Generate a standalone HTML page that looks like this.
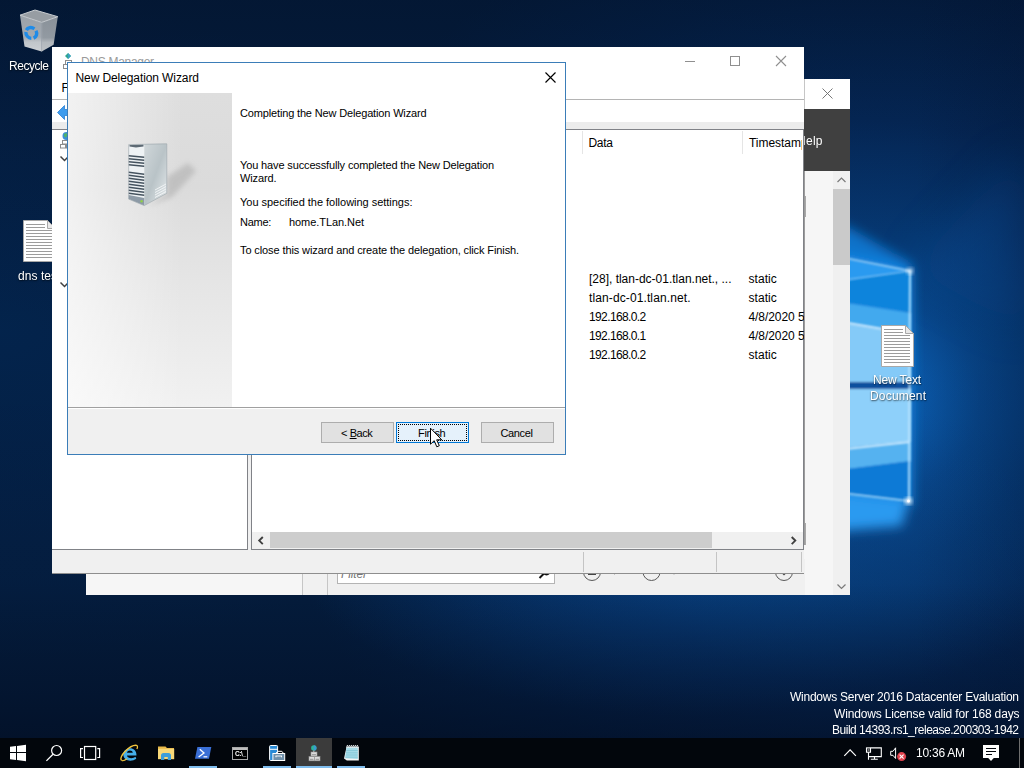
<!DOCTYPE html>
<html lang="en">
<head>
<meta charset="utf-8">
<title>DNS Manager - New Delegation Wizard</title>
<style>
html,body{margin:0;padding:0}
body{width:1024px;height:768px;overflow:hidden;position:relative;background:#04193b;font-family:"Liberation Sans",sans-serif;font-size:12px;line-height:16px;color:#000}
.abs{position:absolute}
.t{position:absolute;white-space:nowrap;line-height:16px;height:16px}
.seg{font-size:12px}
.tah{font-size:11px}
.gs{will-change:transform}
.dl{color:#fff;will-change:transform;text-shadow:0 1px 2px rgba(0,0,0,.5),1px 1px 1px rgba(0,0,0,.25)}
</style>
</head>
<body>
<svg id="wall" width="1024" height="768" viewBox="0 0 1024 768" style="position:absolute;left:0;top:0">
  <defs>
    <radialGradient id="g1" cx="860" cy="400" r="600" gradientUnits="userSpaceOnUse" gradientTransform="translate(860 400) scale(1 0.85) translate(-860 -400)">
      <stop offset="0" stop-color="#0d66bd"/>
      <stop offset="0.1" stop-color="#0a58a8"/>
      <stop offset="0.2" stop-color="#08478c"/>
      <stop offset="0.32" stop-color="#063a76"/>
      <stop offset="0.55" stop-color="#05295a"/>
      <stop offset="0.8" stop-color="#042148"/>
      <stop offset="1" stop-color="#041d3e"/>
    </radialGradient>
    <radialGradient id="g2" cx="0" cy="330" r="330" gradientUnits="userSpaceOnUse" gradientTransform="translate(0 330) scale(1.6 1) translate(0 -330)">
      <stop offset="0" stop-color="#022a5a" stop-opacity="0.5"/>
      <stop offset="1" stop-color="#04275a" stop-opacity="0"/>
    </radialGradient>
    <radialGradient id="g3" cx="690" cy="560" r="260" gradientUnits="userSpaceOnUse" gradientTransform="translate(690 560) scale(1.5 0.6) translate(-690 -560)">
      <stop offset="0" stop-color="#0a4a90" stop-opacity="0.7"/>
      <stop offset="1" stop-color="#0a4a90" stop-opacity="0"/>
    </radialGradient>
    <linearGradient id="gv" x1="0" y1="0" x2="0" y2="1">
      <stop offset="0" stop-color="#020a1c" stop-opacity="0.3"/>
      <stop offset="0.2" stop-color="#020a1c" stop-opacity="0.08"/>
      <stop offset="0.45" stop-color="#020a1c" stop-opacity="0"/>
      <stop offset="0.76" stop-color="#020a1c" stop-opacity="0.06"/>
      <stop offset="0.9" stop-color="#020a1c" stop-opacity="0.4"/>
      <stop offset="1" stop-color="#020a1c" stop-opacity="0.7"/>
    </linearGradient>
    <filter id="b2" x="-20%" y="-20%" width="140%" height="140%"><feGaussianBlur stdDeviation="2"/></filter>
    <filter id="b1" x="-20%" y="-20%" width="140%" height="140%"><feGaussianBlur stdDeviation="0.8"/></filter>
    <filter id="b6" x="-50%" y="-50%" width="200%" height="200%"><feGaussianBlur stdDeviation="6"/></filter>
    <filter id="b20" filterUnits="userSpaceOnUse" x="-100" y="-100" width="1224" height="968"><feGaussianBlur stdDeviation="22"/></filter>
  </defs>
  <rect width="1024" height="768" fill="url(#g1)"/>
  <rect width="1024" height="768" fill="url(#g2)"/>
  <rect width="1024" height="768" fill="url(#g3)"/>
  <rect width="1024" height="768" fill="url(#gv)"/>
  <!-- soft light beams -->
  <g filter="url(#b20)" opacity="0.35">
    <polygon points="912,268 1024,150 1024,330" fill="#0b57a8"/>
    
  </g>
  <linearGradient id="gr" x1="915" y1="0" x2="1024" y2="0" gradientUnits="userSpaceOnUse"><stop offset="0" stop-color="#021230" stop-opacity="0"/><stop offset="1" stop-color="#021230" stop-opacity="0.22"/></linearGradient>
  <rect x="915" y="0" width="109" height="768" fill="url(#gr)"/>
  <!-- window logo -->
  <g>
    <g filter="url(#b6)">
      <polygon points="780,240 912,268 912,505 780,520" fill="#1586e0"/>
      <polygon points="800,488 908,501 902,526 800,534" fill="#2a9af0"/>
      <polygon points="800,212 850,228 912,264 912,272 800,270" fill="#1585e6" opacity="0.75"/>
    </g>
    <g filter="url(#b1)">
      <polygon points="800,250 911,271 800,288" fill="#2a9af0"/>
      <polygon points="800,288 911,271 911,312 800,296" fill="#0f84dc"/>
      <polygon points="800,296 911,313 911,334 800,314.700" fill="#42a9ee"/>
      <polygon points="800,314.700 911,334 911,382 800,382" fill="#84caf8"/>
      <polygon points="800,382 911,382 911,389 800,389" fill="#0a4f9e"/>
      <polygon points="800,389 911,389 911,442 800,452" fill="#8ed0fa"/>
      <polygon points="800,452 911,442 911,461 800,475" fill="#55b2f0"/>
      <polygon points="800,475 911,461 911,501 800,488" fill="#0b7ad6"/>
    </g>
    <g filter="url(#b1)" fill="none" stroke="#d8f0ff">
      <path d="M800,249 L911,271" stroke-width="1.6" opacity="0.75"/>
      <path d="M800,286 L911,271" stroke-width="1.2" opacity="0.6"/>
      <path d="M800,314.700 L884,329.300" stroke-width="2" opacity="0.9"/>
      <path d="M800,454 L909,442" stroke-width="2" opacity="0.9"/>
      <path d="M800,488 L909,501" stroke-width="1.4" opacity="0.8"/>
      <path d="M910,271 L909,501" stroke-width="2" stroke="#bfe6ff" opacity="0.95"/>
    </g>
    <circle cx="908.500" cy="501" r="3.500" fill="#ffffff" filter="url(#b2)" opacity="0.95"/><circle cx="908.500" cy="501" r="1.500" fill="#ffffff"/>
    <circle cx="910" cy="271" r="3" fill="#ffffff" filter="url(#b2)" opacity="0.8"/>
  </g>
</svg>
<!-- desktop icons -->
<svg class="abs" style="left:14px;top:6px" width="50" height="50" viewBox="14 6 50 50">
  <defs>
    <linearGradient id="rb1" x1="0" y1="0" x2="0" y2="1"><stop offset="0" stop-color="#a2a8ae"/><stop offset="0.6" stop-color="#a9afb5"/><stop offset="0.74" stop-color="#c9cdd0"/><stop offset="1" stop-color="#d4d7da"/></linearGradient>
    <linearGradient id="rb2" x1="0" y1="0" x2="0" y2="1"><stop offset="0" stop-color="#8f969d"/><stop offset="0.6" stop-color="#989fa6"/><stop offset="0.74" stop-color="#babfc3"/><stop offset="1" stop-color="#c6cacd"/></linearGradient>
  </defs>
  <polygon points="20,15.200 41.700,22.400 41.700,51.600 24.500,46.400" fill="url(#rb1)" opacity="0.96"/>
  <polygon points="41.700,22.400 57.800,16.700 53.600,44.800 41.700,51.600" fill="url(#rb2)" opacity="0.96"/>
  <polygon points="20,15.200 35,10 57.800,16.700 41.700,22.400" fill="#979da3"/>
  <polygon points="20,15.200 35,10 57.800,16.700 41.700,22.400" fill="none" stroke="#c9cdd1" stroke-width="1"/>
  <path d="M41.700,22.400 V51.600" stroke="#b9bec3" stroke-width="0.600"/>
  <path d="M26.41,30.72 A5.4,5.4 0 0 1 34.40,28.58 M35.98,30.30 A5.4,5.4 0 0 1 33.58,37.89 M31.30,38.40 A5.4,5.4 0 0 1 25.92,32.53" fill="none" stroke="#1e8be8" stroke-width="3.4" transform="skewY(6) translate(0 -3.300)"/>
</svg>
<span class="t seg dl" style="left:9px;top:58px;letter-spacing:-0.448px;">Recycle Bin</span>
<svg class="abs" style="left:23px;top:220px" width="33" height="42" viewBox="0 0 33 42">
  <path d="M0.500,0.500 H24.500 L32.500,8.500 V41.500 H0.500 Z" fill="#fff" stroke="#a8a8a8" stroke-width="1"/>
  <path d="M24.500,0.500 V8.500 H32.500 Z" fill="#e8e8e8" stroke="#a8a8a8" stroke-width="1"/>
  <g stroke="#9c9c9c" stroke-width="1"><path d="M3,4.500H22M3,7.500H22M3,10.500H29M3,13.500H29M3,16.500H29M3,19.500H29M3,22.500H29M3,25.500H29M3,28.500H29M3,31.500H29M3,34.500H29M3,37.500H29"/></g>
</svg>
<span class="t seg dl" style="left:18px;top:268px;letter-spacing:0.059px;">dns test</span>
<svg class="abs" style="left:881px;top:325px" width="33" height="42" viewBox="0 0 33 42">
  <path d="M0.500,0.500 H24.500 L32.500,8.500 V41.500 H0.500 Z" fill="#fff" stroke="#a8a8a8" stroke-width="1"/>
  <path d="M24.500,0.500 V8.500 H32.500 Z" fill="#e8e8e8" stroke="#a8a8a8" stroke-width="1"/>
  <g stroke="#9c9c9c" stroke-width="1"><path d="M3,4.500H22M3,7.500H22M3,10.500H29M3,13.500H29M3,16.500H29M3,19.500H29M3,22.500H29M3,25.500H29M3,28.500H29M3,31.500H29M3,34.500H29M3,37.500H29"/></g>
</svg>
<span class="t seg dl" style="left:873px;top:372px;letter-spacing:-0.134px;">New Text</span>
<span class="t seg dl" style="left:869.5px;top:388px;letter-spacing:0.185px;">Document</span>
<!-- Server Manager window (behind) -->
<div id="sm" class="abs" style="left:86px;top:79px;width:764px;height:516px;background:#f6f6f6;overflow:hidden">
    <div class="abs" style="left:0;top:0;width:764px;height:30px;background:#fff"></div>
  <svg class="abs" style="left:735px;top:8px" width="13" height="13" viewBox="0 0 13 13"><path d="M1.5,1.5 L11.5,11.5 M11.5,1.5 L1.5,11.5" stroke="#707070" stroke-width="0.950" fill="none"/></svg>
  <div class="abs" style="left:0;top:30px;width:764px;height:62px;background:#404040"></div>
  <span class="t seg gs" style="left:711px;top:54px;letter-spacing:0.271px;color:#fff">Help</span>
  <div class="abs" style="left:718px;top:0;width:1px;height:30px;background:#c6c6c6"></div>
  <!-- scrollbar -->
  <div class="abs" style="left:747px;top:92px;width:17px;height:424px;background:#f0f0f0"></div>
  <div class="abs" style="left:747px;top:110px;width:17px;height:76px;background:#cacaca"></div>
  <svg class="abs" style="left:747px;top:92px" width="17" height="17" viewBox="0 0 17 17"><path d="M4.5,11 L8.5,7 L12.5,11" stroke="#7a7a7a" stroke-width="1.2" fill="none"/></svg>
  <svg class="abs" style="left:747px;top:499px" width="17" height="17" viewBox="0 0 17 17"><path d="M4.5,6.5 L8.5,10.5 L12.5,6.5" stroke="#7a7a7a" stroke-width="1.2" fill="none"/></svg>
  <!-- left thin line along DNS edge -->
  <div class="abs" style="left:718px;top:92px;width:1px;height:374px;background:#9c9c9c"></div>
  <div class="abs" style="left:719px;top:117px;width:1px;height:21px;background:#a8a8a8"></div>
  <div class="abs" style="left:719px;top:444px;width:1px;height:22px;background:#a8a8a8"></div>
  <!-- bottom strip -->
  <div class="abs" style="left:216px;top:480px;width:1px;height:36px;background:#c6c6c6"></div>
  <div class="abs" style="left:217px;top:480px;width:24px;height:36px;background:#f1f1f1"></div>
  <div class="abs" style="left:241px;top:480px;width:1px;height:36px;background:#c6c6c6"></div>
  <div class="abs" style="left:242px;top:480px;width:477px;height:36px;background:#f0f0f0"></div>
  <div class="abs" style="left:251px;top:482px;width:218px;height:23px;background:#fff;border:1px solid #b4b4b4;box-sizing:border-box"></div>
  <span class="t seg" style="left:255px;top:487px;letter-spacing:-0.134px;color:#767676;font-style:italic">Filter</span>
  <svg class="abs" style="left:451px;top:486px" width="16" height="16" viewBox="0 0 16 16"><circle cx="9.5" cy="6" r="3.6" stroke="#111" stroke-width="1.6" fill="none"/><path d="M7,8.5 L2.5,13" stroke="#111" stroke-width="2"/></svg>
  <svg class="abs" style="left:496px;top:484px" width="220" height="20" viewBox="0 0 220 20">
    <g fill="none" stroke="#5a5a5a" stroke-width="1"><circle cx="10" cy="9" r="8.500"/><circle cx="69.500" cy="9" r="8.500"/><circle cx="202" cy="9" r="8.500"/></g>
    <g fill="#444"><rect x="6" y="7" width="8" height="2"/><rect x="6" y="10.5" width="8" height="1.5"/><rect x="65.5" y="6" width="8" height="5"/><path d="M198.500,9 L205.500,9 L202,12.500 Z"/><path d="M30,9 L35,9 L32.500,11.500 Z"/><path d="M89.500,9 L94.500,9 L92,11.500 Z"/></g>
  </svg>
</div>
<!-- DNS Manager window -->
<div id="dns" class="abs" style="left:52px;top:47px;width:752px;height:527px;background:#fff;overflow:hidden">
    <!-- title bar -->
  <svg class="abs" style="left:7px;top:5px" width="18" height="18" viewBox="0 0 18 18">
    <path d="M6,4 L9,1 L12,4 L9,7 Z" fill="#2fa592"/><path d="M9,1 L12,4 L9,7 Z" fill="#3a9fc4"/>
    <g fill="#fff" stroke="#8c8c8c" stroke-width="1"><rect x="6.500" y="8.500" width="6" height="4"/><rect x="4.500" y="12.500" width="5" height="4"/><rect x="10.500" y="12.500" width="5" height="4"/></g>
  </svg>
  <span class="t seg" style="left:29px;top:7px;letter-spacing:-0.303px;color:#9a9a9a">DNS Manager</span>
  <svg class="abs" style="left:628px;top:4px" width="112" height="22" viewBox="0 0 112 22" fill="none" stroke="#8f8f8f" stroke-width="1">
    <path d="M5,10.500 H15"/><rect x="50.500" y="5.500" width="9" height="9"/><path d="M96,5 L106,15 M106,5 L96,15" stroke-width="1.100"/>
  </svg>
  <!-- menu bar -->
  <span class="t seg" style="left:9.5px;top:33px;">File</span>
  <div class="abs" style="left:0;top:52px;width:752px;height:1px;background:#b4b4b4"></div>
  <!-- toolbar -->
  <svg class="abs" style="left:4px;top:57px" width="18" height="18" viewBox="0 0 18 18"><path d="M1.500,8.500 L8.500,1.500 V5.500 H16.500 V11.500 H8.500 V15.500 Z" fill="#3d9cee" stroke="#2a7fd4" stroke-width="0.8"/></svg>
  <div class="abs" style="left:0;top:75px;width:752px;height:7px;background:#ececec"></div>
  <!-- tree pane -->
  <div class="abs" style="left:0;top:82px;width:196px;height:421px;background:#fff;border:1px solid #808287;border-left:none;box-sizing:border-box"></div>
  <svg class="abs" style="left:7px;top:84px" width="18" height="18" viewBox="0 0 18 18">
    <circle cx="7.500" cy="5" r="4" fill="#3c8fd6"/><path d="M5,3 Q7,1.500 9,3.500 Q8,6 6,6.500 Q4.500,5 5,3 Z" fill="#4fb36a"/>
    <g fill="#fff" stroke="#8c8c8c" stroke-width="1"><rect x="3.500" y="9.500" width="5" height="3.500"/><rect x="1.500" y="13.500" width="5" height="3.500"/><rect x="7.500" y="13.500" width="5" height="3.500"/></g>
  </svg>
  <svg class="abs" style="left:7px;top:107px" width="12" height="10" viewBox="0 0 12 10"><path d="M1.500,2.500 L5.500,6.500 L9.500,2.500" fill="none" stroke="#404040" stroke-width="1.500"/></svg>
  <svg class="abs" style="left:7px;top:233px" width="12" height="10" viewBox="0 0 12 10"><path d="M1.500,2.500 L5.500,6.500 L9.500,2.500" fill="none" stroke="#404040" stroke-width="1.500"/></svg>
  <!-- splitter -->
  <div class="abs" style="left:196px;top:82px;width:3px;height:421px;background:#f0f0f0"></div>
  <!-- list pane -->
  <div class="abs" style="left:199px;top:82px;width:553px;height:421px;background:#fff;border:1px solid #808287;box-sizing:border-box"></div>
  <div class="abs" style="left:530px;top:84px;width:1px;height:23px;background:#e5e5e5"></div>
  <div class="abs" style="left:690px;top:84px;width:1px;height:23px;background:#e5e5e5"></div>
  <span class="t seg" style="left:536.5px;top:88px;letter-spacing:-0.320px;">Data</span>
  <div class="abs" style="left:0;top:82px;width:750px;height:30px;overflow:hidden"><span class="t seg" style="left:697px;top:6px;letter-spacing:-0.033px;">Timestamp</span></div>
  <span class="t seg" style="left:537px;top:224px;letter-spacing:-0.008px;">[28], tlan-dc-01.tlan.net., ...</span>
  <span class="t seg" style="left:696.5px;top:224px;letter-spacing:0.047px;">static</span>
  <span class="t seg" style="left:537px;top:243px;letter-spacing:0.110px;">tlan-dc-01.tlan.net.</span>
  <span class="t seg" style="left:696.5px;top:243px;letter-spacing:0.047px;">static</span>
  <span class="t seg" style="left:537px;top:262px;letter-spacing:-0.616px;">192.168.0.2</span>
  <span class="t seg" style="left:696.5px;top:262px;letter-spacing:-0.067px;">4/8/2020 5:00:00 PM</span>
  <span class="t seg" style="left:537px;top:281px;letter-spacing:-0.616px;">192.168.0.1</span>
  <span class="t seg" style="left:696.5px;top:281px;letter-spacing:-0.067px;">4/8/2020 5:00:00 PM</span>
  <span class="t seg" style="left:537px;top:300px;letter-spacing:-0.616px;">192.168.0.2</span>
  <span class="t seg" style="left:696.5px;top:300px;letter-spacing:0.047px;">static</span>
  <!-- horizontal scrollbar -->
  <div class="abs" style="left:200px;top:485px;width:551px;height:17px;background:#f0f0f0"></div>
  <div class="abs" style="left:218px;top:485px;width:442px;height:16px;background:#cdcdcd"></div>
  <svg class="abs" style="left:200px;top:485px" width="17" height="17" viewBox="0 0 17 17"><path d="M10.800,5 L7.200,8.600 L10.800,12.200" fill="none" stroke="#404040" stroke-width="1.900"/></svg>
  <svg class="abs" style="left:733px;top:485px" width="17" height="17" viewBox="0 0 17 17"><path d="M6.700,5 L10.300,8.600 L6.700,12.200" fill="none" stroke="#404040" stroke-width="1.900"/></svg>
  <!-- status bar -->
  <div class="abs" style="left:0;top:503px;width:752px;height:23px;background:#f0f0f0"></div>
  <div class="abs" style="left:531px;top:505px;width:1px;height:20px;background:#c4c4c4"></div>
  <div class="abs" style="left:664px;top:505px;width:1px;height:20px;background:#c4c4c4"></div>
  <div class="abs" style="left:749px;top:505px;width:1px;height:20px;background:#c4c4c4"></div>
  <div class="abs" style="left:0;top:526px;width:752px;height:1px;background:#8e8e8e"></div>
</div>
<!-- New Delegation Wizard dialog -->
<div id="wiz" class="abs" style="left:67px;top:62px;width:499px;height:393px;background:#fff;border:1px solid #3b7db8;box-sizing:border-box;overflow:hidden">
    <span class="t seg" style="left:7.5px;top:7px;letter-spacing:-0.095px;">New Delegation Wizard</span>
  <svg class="abs" style="left:476px;top:8px" width="13" height="13" viewBox="0 0 13 13"><path d="M1.500,1.500 L11.500,11.500 M11.500,1.500 L1.500,11.500" stroke="#000" stroke-width="1.150" fill="none"/></svg>
  <!-- watermark panel -->
  <svg class="abs" style="left:0;top:30px" width="164" height="314" viewBox="0 0 164 314">
    <defs>
      <linearGradient id="wp1" x1="0" y1="0" x2="0" y2="1"><stop offset="0" stop-color="#dedede"/><stop offset="0.3" stop-color="#dbdbdb"/><stop offset="0.6" stop-color="#e5e5e5"/><stop offset="1" stop-color="#f1f1f1"/></linearGradient>
      <linearGradient id="wp2" x1="0" y1="0" x2="1" y2="0"><stop offset="0" stop-color="#fff" stop-opacity="0.6"/><stop offset="0.7" stop-color="#fff" stop-opacity="0"/></linearGradient>
      <linearGradient id="sv1" x1="0" y1="0" x2="1" y2="1"><stop offset="0" stop-color="#d0d7da"/><stop offset="0.5" stop-color="#b9c3c7"/><stop offset="1" stop-color="#e6ebed"/></linearGradient>
      <filter id="wb" x="-50%" y="-50%" width="200%" height="200%"><feGaussianBlur stdDeviation="2.500"/></filter>
    </defs>
    <rect width="164" height="314" fill="url(#wp1)"/>
    <rect width="164" height="314" fill="url(#wp2)"/>
    <!-- shadow -->
    <polygon points="80,113 99,101 99,84 120,70 128,78 104,104" fill="#b2b2b2" opacity="0.65" filter="url(#wb)"/>
    <!-- server: side face -->
    <polygon points="76.200,51 98.800,50.800 98.800,100.300 76.200,112.600" fill="url(#sv1)"/>
    <g stroke="#f4f6f7" stroke-width="0.900"><path d="M87,99.500 L98,93.500"/><path d="M87,102 L98,96"/><path d="M87,104.500 L98,98.500"/><path d="M87,97 L98,91"/></g>
    <!-- front face -->
    <polygon points="60.700,51.600 76.200,51 76.200,112.600 60.700,106.100" fill="#eef2f4"/>
    <polygon points="61.500,52 75.500,51.500 75.500,53.500 68,54.500 61.500,53.500" fill="#5d6a74"/>
    <g fill="#44525e">
      <polygon points="60.700,62 76.200,63.500 76.200,65 60.700,63.500"/><polygon points="60.700,65 76.200,66.500 76.200,68 60.700,66.500"/><polygon points="60.700,68 76.200,69.500 76.200,71 60.700,69.500"/><polygon points="60.700,71 76.200,72.500 76.200,74 60.700,72.500"/>
      <polygon points="60.700,78.500 76.200,80.500 76.200,82 60.700,80"/><polygon points="60.700,81.500 76.200,83.500 76.200,85 60.700,83"/><polygon points="60.700,84.500 76.200,86.500 76.200,88 60.700,86"/><polygon points="60.700,87.500 76.200,89.500 76.200,91 60.700,89"/><polygon points="60.700,90.500 76.200,92.500 76.200,94 60.700,92"/><polygon points="60.700,93.500 76.200,95.500 76.200,97 60.700,95"/><polygon points="60.700,96.500 76.200,98.500 76.200,100 60.700,98"/><polygon points="60.700,99.500 76.200,101.500 76.200,103 60.700,101"/>
    </g>
    <polygon points="60.700,102 76.200,105 76.200,112.600 60.700,106.100" fill="#8d9aa6"/>
    <circle cx="73.600" cy="108.300" r="1.200" fill="#8fd04a"/>
    <path d="M60.700,51.600 V106.100 L76.200,112.600 L98.800,100.300 V50.800 Z" fill="none" stroke="#9aa4aa" stroke-width="0.600"/>
  </svg>
  <!-- text -->
  <span class="t tah" style="left:172px;top:42px;letter-spacing:-0.154px;">Completing the New Delegation Wizard</span>
  <span class="t tah" style="left:172px;top:94px;letter-spacing:-0.135px;">You have successfully completed the New Delegation</span>
  <span class="t tah" style="left:172px;top:107px;letter-spacing:-0.114px;">Wizard.</span>
  <span class="t tah" style="left:172px;top:131px;letter-spacing:-0.021px;">You specified the following settings:</span>
  <span class="t tah" style="left:172px;top:151px;letter-spacing:-0.277px;">Name:</span>
  <span class="t tah" style="left:221px;top:151px;letter-spacing:-0.061px;">home.TLan.Net</span>
  <span class="t tah" style="left:172px;top:179px;letter-spacing:-0.107px;">To close this wizard and create the delegation, click Finish.</span>
  <!-- footer -->
  <div class="abs" style="left:0;top:344px;width:497px;height:1px;background:#a0a0a0"></div>
  <div class="abs" style="left:0;top:346px;width:497px;height:45px;background:#f0f0f0"></div>
  <div class="abs btn" style="left:253px;top:359px;width:73px;height:21px;background:#e1e1e1;border:1px solid #adadad;box-sizing:border-box"></div>
  <div class="abs btn" style="left:328px;top:359px;width:73px;height:21px;background:#e5f1fb;border:1px solid #0078d7;box-sizing:border-box"><div class="abs" style="left:1px;top:1px;width:69px;height:17px;border:1px dotted #000;box-sizing:border-box"></div></div>
  <div class="abs btn" style="left:413px;top:359px;width:73px;height:21px;background:#e1e1e1;border:1px solid #adadad;box-sizing:border-box"></div>
  <span class="t tah" style="left:273px;top:362px;letter-spacing:-0.418px;">&lt; <u>B</u>ack</span>
  <span class="t tah" style="left:350px;top:362px;letter-spacing:-0.329px;">Finish</span>
  <span class="t tah" style="left:432.5px;top:362px;letter-spacing:-0.370px;">Cancel</span>
</div>
<!-- watermark -->
<span class="t seg gs" style="left:790px;top:689px;letter-spacing:-0.245px;color:#fff">Windows Server 2016 Datacenter Evaluation</span>
<span class="t seg gs" style="left:833.5px;top:706px;letter-spacing:-0.160px;color:#fff">Windows License valid for 168 days</span>
<span class="t seg gs" style="left:832px;top:722px;letter-spacing:-0.485px;color:#fff">Build 14393.rs1_release.200303-1942</span>
<!-- taskbar -->
<div id="taskbar" class="abs" style="left:0;top:738px;width:1024px;height:30px;background:#02060c;overflow:hidden">
    <div class="abs" style="left:296px;top:0;width:36px;height:30px;background:#3b3b3b"></div>
  <div class="abs" style="left:189px;top:28px;width:28px;height:2px;background:#7fbdee"></div>
  <div class="abs" style="left:263px;top:28px;width:28px;height:2px;background:#7fbdee"></div>
  <div class="abs" style="left:296px;top:28px;width:36px;height:2px;background:#7fbdee"></div>
  <div class="abs" style="left:337px;top:28px;width:28px;height:2px;background:#7fbdee"></div>
  <svg class="abs" style="left:0;top:0" width="1024" height="30" viewBox="0 738 1024 30">
    <!-- start -->
    <g fill="#fff"><polygon points="10,746.800 16,746 16,752 10,752"/><polygon points="17,745.900 26,744.700 26,752 17,752"/><polygon points="10,753 16,753 16,760 10,759.200"/><polygon points="17,753 26,753 26,761.200 17,760.100"/></g>
    <!-- search -->
    <circle cx="56.600" cy="750.500" r="5" fill="none" stroke="#fff" stroke-width="1.200"/><path d="M53,754.300 L46.400,760.900" stroke="#fff" stroke-width="1.300"/>
    <!-- task view -->
    <g fill="none" stroke="#fff" stroke-width="1.200"><rect x="84.500" y="746.500" width="11.200" height="13"/><path d="M83,748.600 H80.600 V757.500 H83 M97.300,748.600 H99.600 V757.500 H97.300"/></g>
    <!-- IE -->
    <g>
      <path d="M136.500,755.500 H127 C127.300,758.500 133,759 135.500,756.800 L136.300,758.800 C132,762 123.500,761.500 123.300,754.500 C123.200,746.500 136.800,745.500 136.500,755.500 Z M127,752.800 H132.800 C132.500,749.800 127.500,749.800 127,752.800 Z" fill="#45aeea"/>
      <path d="M121.500,760.300 C118,757 130,744.500 136.500,745.300 C138,745.800 137.500,748 136.800,749" fill="none" stroke="#f2c43c" stroke-width="1.300"/>
      <path d="M121.500,760.300 C123,761.300 125.500,760 127,758.800" fill="none" stroke="#f2c43c" stroke-width="1.100"/>
    </g>
    <!-- explorer -->
    <g>
      <path d="M158,746.500 H165.500 L167,748 H174 V759 H158 Z" fill="#e9b949"/>
      <rect x="158" y="748.800" width="16.200" height="10.400" fill="#f8d878"/>
      <path d="M161,760 V755.500 Q161,753 163.500,753 H168.500 Q171,753 171,755.500 V760 H167.800 V757 H164.300 V760 Z" fill="#3c9edb"/>
    </g>
    <!-- powershell -->
    <g>
      <polygon points="197.400,747 211.300,747 209,758.800 195,758.800" fill="#3a6fd6"/>
      <path d="M199.800,749.300 L204,753 L198.600,757" fill="none" stroke="#fff" stroke-width="1.300"/><path d="M203.500,756.800 H207.300" stroke="#fff" stroke-width="1.200"/>
    </g>
    <!-- cmd -->
    <g>
      <rect x="232.500" y="747.500" width="15" height="12" fill="#000" stroke="#a9a9a9" stroke-width="1"/>
      <rect x="233" y="748" width="14" height="2" fill="#bdbdbd"/>
    </g>
    <!-- server manager -->
    <g>
      <rect x="269.600" y="745.500" width="8" height="15" rx="1" fill="#2a8bd6" stroke="#fff" stroke-width="1"/>
      <path d="M270,749.300 H277.500" stroke="#fff" stroke-width="1"/>
      <path d="M275.800,753.500 L277.600,751.300 H281.800 L283.600,753.500" fill="none" stroke="#fff" stroke-width="1"/>
      <rect x="272.900" y="753.500" width="11.800" height="7" fill="#6f90aa" stroke="#fff" stroke-width="1"/>
      <path d="M275.500,756 H282 M276,756 V757.300 M281.500,756 V757.300" stroke="#fff" stroke-width="0.900" fill="none"/>
    </g>
    <!-- dns -->
    <g>
      <circle cx="313.800" cy="747.900" r="2.700" fill="#2cb59a"/><path d="M313.800,745.200 A2.700,2.700 0 0 1 313.800,750.600 Z" fill="#3a9ad0"/>
      <path d="M313.800,750.500 V752" stroke="#cfcfcf" stroke-width="1"/>
      <g fill="#dcdcdc" stroke="#9a9a9a" stroke-width="0.600"><rect x="311" y="752" width="6" height="4"/><rect x="309" y="756.600" width="5.400" height="4.200"/><rect x="314.600" y="756.600" width="5.400" height="4.200"/></g>
      <g stroke="#7d7d7d" stroke-width="0.800"><path d="M312,754.700 H316 M310,759.300 H313.400 M315.600,759.300 H319"/></g>
    </g>
    <!-- notepad -->
    <g>
      <polygon points="346.500,747 358.800,747 358.800,760.600 346.800,760.600 344,758.500" fill="#f4f4f4"/>
      <polygon points="346.500,747.500 357.800,747.500 357.800,759 345,758.300" fill="#a5dbe8"/>
      <g stroke="#7cc3d4" stroke-width="0.700"><path d="M346.300,750.500 H357.800 M346,752.800 H357.800 M345.700,755 H357.800 M345.400,757.200 H357.800"/></g>
      <path d="M346.500,747.500 L347.400,745.200 L348.400,747.500 L349.400,745.200 L350.400,747.500 L351.400,745.200 L352.400,747.500 L353.400,745.200 L354.400,747.500 L355.400,745.200 L356.400,747.500 L357.400,745.200 L358.400,747.500" fill="none" stroke="#e9eef0" stroke-width="0.900"/>
    </g>
    <!-- tray -->
    <path d="M844.300,755.800 L850.100,749.900 L855.900,755.800" fill="none" stroke="#fff" stroke-width="1.200"/>
    <g fill="none" stroke="#fff" stroke-width="1.100"><path d="M870.600,747.900 H881.300 V756.600 H868.500"/><rect x="866.500" y="747.900" width="4" height="4.300"/><path d="M868.500,752.200 V759.700 M874.500,756.600 V759.300 M870.800,759.300 H877.800"/><path d="M867.600,750 H869.500" stroke-width="0.900"/></g>
    <path d="M890.700,751.300 H893 L895.600,747.800 V758.500 L893,755.300 H890.700 Z" fill="none" stroke="#fff" stroke-width="1"/>
    <circle cx="901.600" cy="756.600" r="4.500" fill="#e0434e"/><path d="M899.600,754.600 L903.600,758.600 M903.600,754.600 L899.600,758.600" stroke="#fff" stroke-width="1.100"/>
    <!-- action center -->
    <path d="M983,745 H999 V758 H993.800 L991,761 L988.200,758 H983 Z" fill="#fff"/>
    <path d="M986,748.500 H996 M986,751.500 H996 M986,754.500 H992" stroke="#02060c" stroke-width="1.100"/>
    <rect x="1019" y="738" width="1" height="30" fill="#6e6e6e"/>
  </svg>
  <span class="t seg" style="left:234.5px;top:8px;letter-spacing:-0.427px;color:#fff;font-size:6.5px;font-weight:bold;will-change:transform">C:\_</span>
  <span class="t seg gs" style="left:916px;top:7px;letter-spacing:-0.243px;color:#fff">10:36 AM</span>
</div>
<!-- mouse cursor -->
<svg class="abs" style="left:429px;top:427px" width="14" height="22" viewBox="0 0 14 22"><path d="M1.500,1.200 V17.200 L5.200,13.700 L7.800,19.800 L10.300,18.700 L7.700,12.800 H12.700 Z" fill="#fff" stroke="#000" stroke-width="1" stroke-linejoin="miter"/></svg>
</body>
</html>
